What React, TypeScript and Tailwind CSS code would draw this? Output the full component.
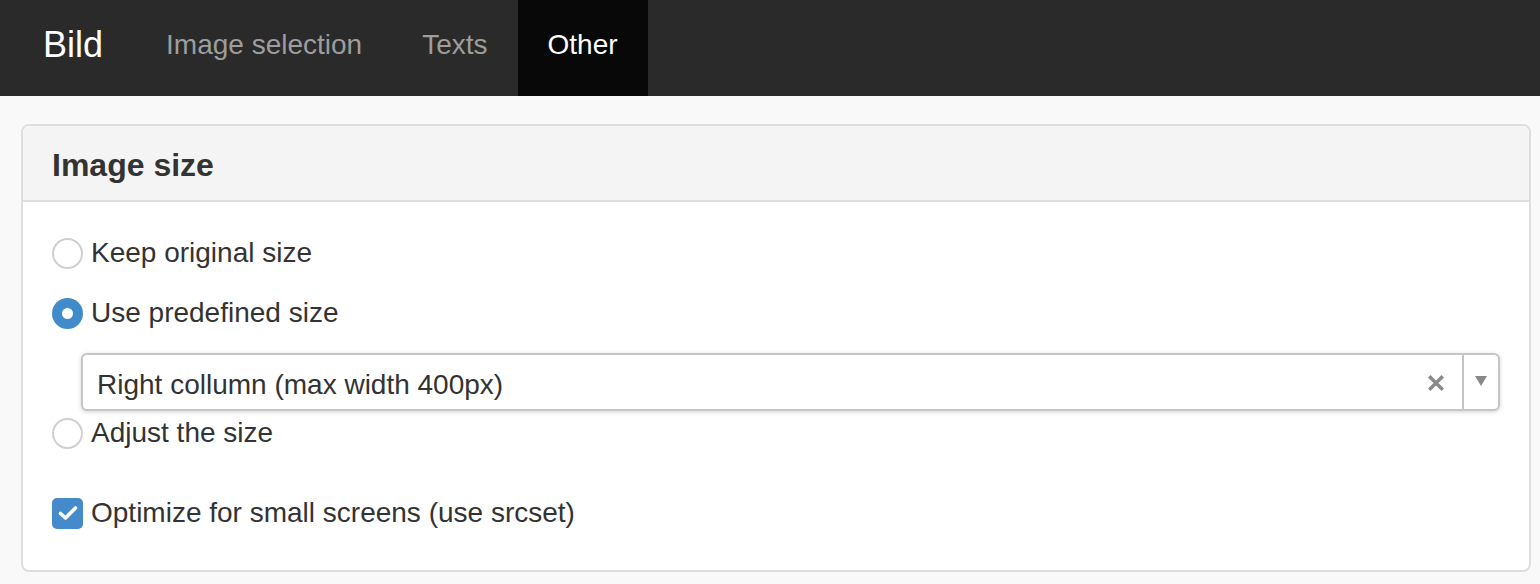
import { useState } from "react";

const tabs = ["Image selection", "Texts", "Other"];

function Radio({ checked, label, onSelect }: { checked: boolean; label: string; onSelect: () => void }) {
  return (
    <label className="flex h-[40px] cursor-pointer items-center" onClick={onSelect}>
      {checked ? (
        <span className="flex h-[31px] w-[31px] items-center justify-center rounded-full bg-[#428bca]">
          <span className="h-[11px] w-[11px] rounded-full bg-white" />
        </span>
      ) : (
        <span className="h-[31px] w-[31px] rounded-full border-2 border-[#d0d0d0] bg-white" />
      )}
      <span className="ml-[8px]">{label}</span>
    </label>
  );
}

export default function App() {
  const [size, setSize] = useState("predefined");
  const [srcset, setSrcset] = useState(true);

  return (
    <div className="min-h-[584px] bg-[#f9f9f9] font-['Liberation_Sans',Arial,sans-serif] text-[28px] text-[#333]">
      {/* Navbar */}
      <nav className="flex h-[96px] items-stretch bg-[#2a2a2a]">
        <a className="flex items-center pb-[6px] pl-[43px] pr-[33px] text-[36px] text-white">Bild</a>
        {tabs.map((t) => (
          <a
            key={t}
            className={
              t === "Other"
                ? "flex items-center bg-[#080808] px-[30px] pb-[6px] text-white"
                : "flex items-center px-[30px] pb-[6px] text-[#9d9d9d]"
            }
          >
            {t}
          </a>
        ))}
      </nav>

      {/* Panel */}
      <div className="ml-[21px] mr-[9px] mt-[28px] rounded-[8px] border-2 border-[#dedede] bg-white">
        <div className="flex h-[76px] items-center rounded-t-[8px] border-b-2 border-[#dedede] bg-[#f4f4f4] px-[29px] pt-[3px]">
          <h3 className="text-[32px] font-bold">Image size</h3>
        </div>
        <div className="px-[29px] pb-[37px] pt-[31px]">
          <Radio checked={size === "original"} label="Keep original size" onSelect={() => setSize("original")} />
          <div className="mt-[20px]">
            <Radio checked={size === "predefined"} label="Use predefined size" onSelect={() => setSize("predefined")} />
          </div>
          <div className="mt-[20px] ml-[29px] flex h-[58px] items-stretch rounded-[6px] border-2 border-[#c6c6c6] bg-white shadow-[0_1px_4px_rgba(0,0,0,0.18)]">
            <span className="flex flex-1 items-center pl-[14px] pt-[5px] text-[#333]">Right collumn (max width 400px)</span>
            <span className="flex w-[52px] items-center justify-center pt-[2px]">
              <svg width="16" height="16" viewBox="0 0 16 16">
                <path d="M2.5 2.5 L13.5 13.5 M13.5 2.5 L2.5 13.5" stroke="#8a8a8a" strokeWidth="3.5" strokeLinecap="square" />
              </svg>
            </span>
            <span className="w-[2px] bg-[#c4c4c4]" />
            <span className="flex w-[34px] items-start justify-center pt-[21px]">
              <svg width="12" height="10" viewBox="0 0 12 10">
                <path d="M0 0 H12 L6 10 Z" fill="#888" />
              </svg>
            </span>
          </div>
          <div className="mt-[2px]">
            <Radio checked={size === "adjust"} label="Adjust the size" onSelect={() => setSize("adjust")} />
          </div>
          <label className="mt-[40px] flex h-[40px] cursor-pointer items-center" onClick={() => setSrcset(!srcset)}>
            {srcset ? (
              <span className="flex h-[31px] w-[31px] items-center justify-center rounded-[5px] bg-[#458acb]">
                <svg width="20" height="16" viewBox="0 0 20 16">
                  <path d="M2.5 8.5 L7.5 13 L17.5 3" fill="none" stroke="white" strokeWidth="3.6" strokeLinecap="round" strokeLinejoin="round" />
                </svg>
              </span>
            ) : (
              <span className="h-[31px] w-[31px] rounded-[5px] border-2 border-[#d0d0d0] bg-white" />
            )}
            <span className="ml-[8px]">Optimize for small screens (use srcset)</span>
          </label>
        </div>
      </div>
    </div>
  );
}
